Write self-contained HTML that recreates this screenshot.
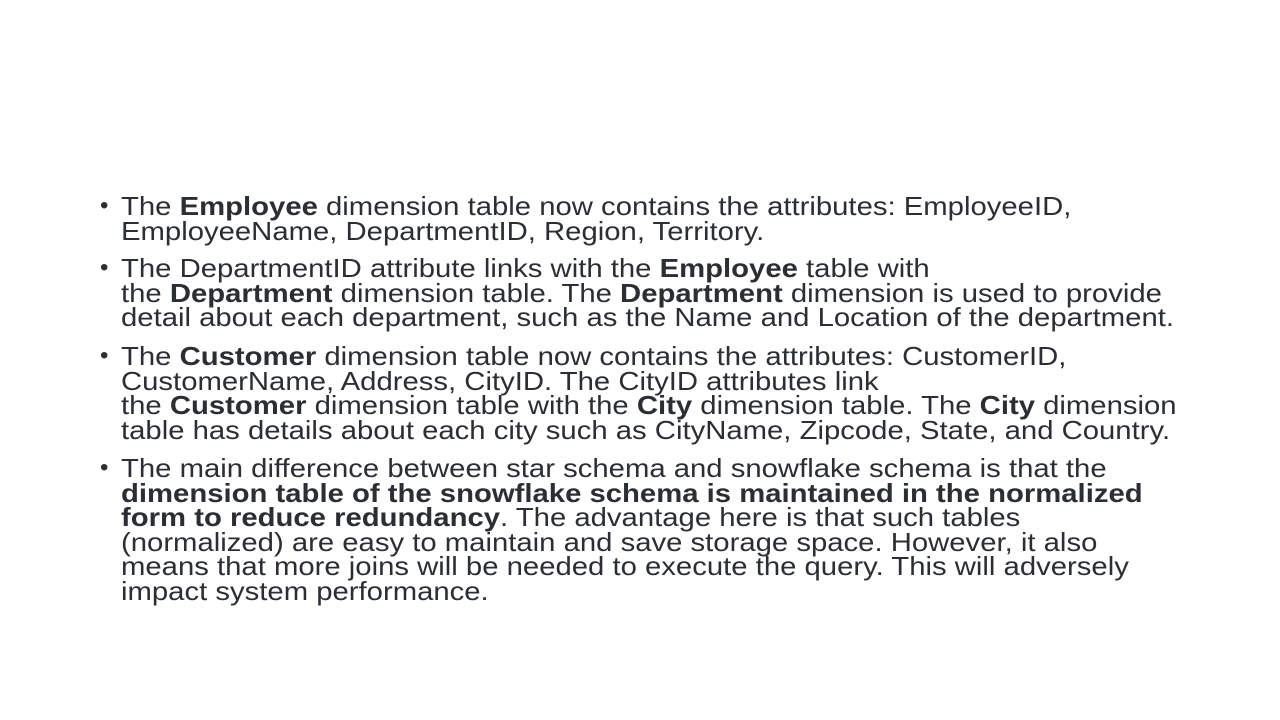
<!DOCTYPE html>
<html><head><meta charset="utf-8"><style>
html,body{margin:0;padding:0;background:#fff;width:1280px;height:720px;overflow:hidden}
body{font-family:"Liberation Sans",Arial,sans-serif;color:#2b2f33;font-size:26px;position:relative}
.p{position:absolute;left:121px;line-height:24.6px;white-space:nowrap;transform:scaleX(1.126);transform-origin:0 0}
.b{position:absolute;left:100px;font-size:24px;line-height:24.6px;color:#2b2f33}
b{font-weight:bold}
</style></head><body>
<div class="b" style="top:194px">•</div>
<div class="b" style="top:256px">•</div>
<div class="b" style="top:344px">•</div>
<div class="b" style="top:456px">•</div>
<div class="p" style="top:194px">The <b>Employee</b> dimension table now contains the attributes: EmployeeID,<br>EmployeeName, DepartmentID, Region, Territory.</div>
<div class="p" style="top:256px">The DepartmentID attribute links with the <b>Employee</b> table with<br>the <b>Department</b> dimension table. The <b>Department</b> dimension is used to provide<br>detail about each department, such as the Name and Location of the department.</div>
<div class="p" style="top:344px">The <b>Customer</b> dimension table now contains the attributes: CustomerID,<br>CustomerName, Address, CityID. The CityID attributes link<br>the <b>Customer</b> dimension table with the <b>City</b> dimension table. The <b>City</b> dimension<br>table has details about each city such as CityName, Zipcode, State, and Country.</div>
<div class="p" style="top:456px">The main difference between star schema and snowflake schema is that the<br><b>dimension table of the snowflake schema is maintained in the normalized<br>form to reduce redundancy</b>. The advantage here is that such tables<br>(normalized) are easy to maintain and save storage space. However, it also<br>means that more joins will be needed to execute the query. This will adversely<br>impact system performance.</div>
</body></html>
